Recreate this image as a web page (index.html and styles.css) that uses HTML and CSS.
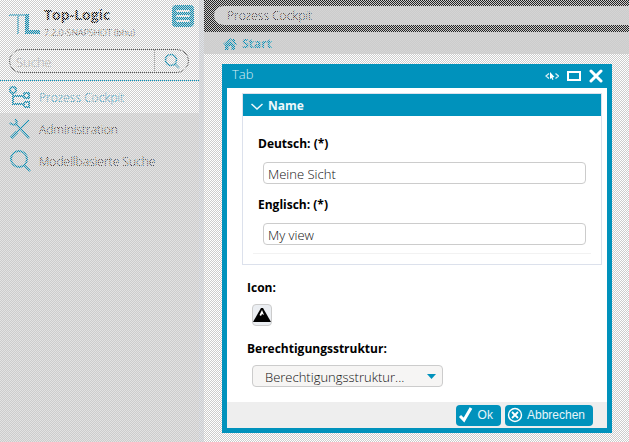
FILE: index.html
```
<!DOCTYPE html>
<html lang="de">
<head>
<meta charset="utf-8">
<title>Top-Logic</title>
<link rel="stylesheet" href="styles.css">
</head>
<body>
<div class="app">
  <aside class="sidebar">
    <header class="brand">
      <svg class="logo" width="32" height="22" viewBox="0 0 32 22" fill="none"><path d="M0 1H17" stroke="#4db4d3" stroke-width="2"/><path d="M9 1V20" stroke="#4db4d3" stroke-width="2"/><path d="M16 0h4v16h11v4H16z" fill="#0092bc"/></svg>
      <div class="brand-text"><strong>Top-Logic</strong><small>7.2.0-SNAPSHOT (bhu)</small></div>
      <button class="menu" aria-label="Menü"><svg width="22" height="22" viewBox="0 0 22 22" fill="none" stroke="#fff" stroke-width="2" stroke-linecap="round"><path d="M5 6h12M5 11h12M5 16h12"/></svg></button>
    </header>
    <form class="search">
      <input type="text" placeholder="Suche" aria-label="Suche">
      <button type="button" aria-label="Suchen"><svg width="16" height="16" viewBox="0 0 16 16" fill="none" stroke="#0092bc" stroke-width="1.500"><circle cx="7" cy="7" r="5.500"/><path d="M11 11l4 4"/></svg></button>
    </form>
    <nav class="nav">
      <a class="active" href="#"><svg width="22" height="22" viewBox="0 0 22 22" fill="none" stroke="#0092bc" stroke-width="2"><circle cx="4" cy="4" r="3"/><path d="M4 7v11h11M4 10h11"/><path d="M15 8l1-1h4v5h-4l-1-1zM15 17l1-1h4v5h-4l-1-1z"/></svg><span>Prozess Cockpit</span></a>
      <a href="#"><svg width="22" height="22" viewBox="0 0 22 22" fill="none" stroke="#0092bc"><path d="M20 2L2 20" stroke-width="2"/><path d="M8 14l-6 6" stroke-width="3"/><path d="M6 1c2 2 2 4 1 5S3 7 1 5M7 6l13 14" stroke-width="2"/></svg><span>Administration</span></a>
      <a href="#"><svg width="22" height="22" viewBox="0 0 22 22" fill="none" stroke="#0092bc" stroke-width="2"><circle cx="10" cy="9" r="8"/><path d="M15 15l6 6"/></svg><span>Modellbasierte Suche</span></a>
    </nav>
  </aside>
  <main class="main">
    <div class="topbar"><div class="pill">Prozess Cockpit</div></div>
    <div class="crumbs"><a href="#"><svg width="14" height="12" viewBox="0 0 14 12" fill="#0092bc"><path d="M7 0l3 2.500V1h2v3l2 2-1 1-6-5-6 5-1-1zM7 3l5 4v5H8.500V8h-3v4H2V7z"/></svg>Start</a></div>
  </main>
</div>
<div class="veil">
  <section class="dialog" role="dialog" aria-labelledby="dialog-title">
    <header class="titlebar">
      <h1 id="dialog-title">Tab</h1>
      <button aria-label="Inspizieren"><svg width="14" height="10" viewBox="0 0 14 10" fill="none" stroke="#d8edf4" stroke-width="1.300"><path d="M4 2.500L1 5l3 2.500M10.500 2.500l3 2.500-3 2.500"/><path d="M5 1v7l1.500-1 1 2 1-.5-1-2 2-.5z" fill="#fff" stroke="none"/></svg></button>
      <button aria-label="Maximieren"><svg width="14" height="10" viewBox="0 0 14 10" fill="none" stroke="#fff" stroke-width="2"><path d="M1 1h12v8H1z"/></svg></button>
      <button aria-label="Schließen"><svg width="14" height="14" viewBox="0 0 14 14" stroke="#fff" stroke-width="3" stroke-linecap="round"><path d="M2 2l10 10M12 2L2 12"/></svg></button>
    </header>
    <div class="content">
      <section class="group">
        <h2><svg width="12" height="7" viewBox="0 0 12 7" fill="none" stroke="#eef8fb" stroke-width="1.500"><path d="M.5 1L6 6l5.500-5"/></svg>Name</h2>
        <div class="group-body">
          <div class="field"><label for="de">Deutsch: (*)</label><input id="de" type="text" value="Meine Sicht"></div>
          <div class="field"><label for="en">Englisch: (*)</label><input id="en" type="text" value="My view"></div>
        </div>
      </section>
      <div class="field icon-field"><label for="icon">Icon:</label><button id="icon" class="icon-choice" aria-label="Icon wählen"><svg width="18" height="14" viewBox="0 0 18 14"><path d="M8 0h2l8 14H0z"/><path d="M9 2L6.500 7l1.500 1 1-2 2 1z" fill="#fff"/></svg></button></div>
      <div class="field"><label for="structure">Berechtigungsstruktur:</label>
        <div class="select"><select id="structure"><option>Berechtigungsstruktur...</option></select><svg width="9" height="5" viewBox="0 0 9 5"><path d="M0 0h9L4.500 5z" fill="#0092bc"/></svg></div></div>
    </div>
    <footer class="actions">
      <button><svg width="16" height="16" viewBox="0 0 16 16" fill="none" stroke="#fff" stroke-width="3"><path d="M2 9l4 4 7-12"/></svg>Ok</button>
      <button><svg width="16" height="16" viewBox="0 0 16 16" fill="none" stroke="#fff" stroke-width="1.400"><circle cx="8" cy="8" r="6.500"/><path d="M5 5l6 6M11 5l-6 6" stroke-width="1.800"/></svg>Abbrechen</button>
    </footer>
  </section>
</div>
</body>
</html>
```
FILE: styles.css
```
* { box-sizing: border-box; }
body { margin: 0; font: 300 13px/18px "Open Sans", sans-serif; color: #000; }
button, input, select { font: inherit; color: inherit; margin: 0; }
button { border: 0; padding: 0; background: none; display: flex; align-items: center; justify-content: center; }
a { color: inherit; text-decoration: none; }
svg { display: block; flex: none; }

.app { display: flex; min-height: 100vh; background: #fff; }
.sidebar { width: 204px; flex: none; display: flex; flex-direction: column; border-right: 5px solid #dfe3ea; }
.brand { display: flex; align-items: flex-start; padding: 5px 5px 0 9px; height: 49px; }
.logo { margin-top: 9px; }
.brand-text { flex: 1; padding-left: 3px; }
.brand-text strong { display: block; font-weight: 700; font-size: 14px; line-height: 20px; color: #000; }
.brand-text small { display: block; font-size: 9px; line-height: 16px; white-space: nowrap; }
.menu { width: 22px; height: 22px; border-radius: 4px; background: #0092bc; }
.search { display: flex; height: 24px; margin: 0 10px 7px 9px; border: 1px solid #555; border-radius: 12px; overflow: hidden; }
.search input { flex: 1; min-width: 0; border: 0; padding: 2px 6px 0; background: transparent; font-size: 13px; }
.search input::placeholder { color: #999; opacity: 1; }
.search button { width: 34px; border-left: 1px solid #aaa; }
.nav { flex: 1; border-top: 1px solid #0092bc; background: #e2e2e2; font-size: 12px; }
.nav a { display: flex; align-items: center; gap: 8px; height: 32px; padding-left: 9px; }
.nav span { padding-top: 2px; }
.nav .active { background: #fff; color: #0092bc; }

.main { flex: 1; min-width: 0; }
.topbar { background: #222; padding: 6px 0 7px 10px; }
.pill { height: 19px; padding-left: 13px; border-radius: 10px 0 0 10px; background: #d4d4d4; font-size: 12px; line-height: 20px; }
.crumbs { height: 22px; background: #d4d4d4; color: #0092bc; font-weight: 700; font-size: 12px; line-height: 24px; padding-left: 19px; }
.crumbs a { display: inline-flex; align-items: center; gap: 5px; }

.veil { position: absolute; inset: 0; padding: 64px 17px 9px 222px; background: repeating-conic-gradient(#ccc 0 25%, transparent 0 50%) 0 0 / 2px 2px; }
.dialog { border: 5px solid #0092bc; border-top: 0; background: #fff; }
.titlebar { height: 24px; display: flex; align-items: center; gap: 8px; padding: 0 4px 0 5px; background: #0092bc; color: #d8edf4; }
.titlebar h1 { flex: 1; margin: 0 0 4px; font-size: 13px; line-height: 20px; font-weight: 300; }
.content { padding: 5px 5px 15px 15px; }
.group { border: 1px solid #dce1ec; margin-bottom: 14px; }
.group h2 { display: flex; align-items: center; gap: 5px; height: 22px; margin: 0; padding: 2px 0 0 8px; background: #0092bc; color: #eef8fb; font-size: 12px; font-weight: 700; }
.group-body { margin: 0 10px 10px; padding: 19px 5px 8px 5px; border-bottom: 1px solid #f2f2f2; display: grid; gap: 12px; }
.field label { display: block; font-size: 12px; line-height: 18px; font-weight: 700; color: #000; }
.content > .field label { margin-left: 5px; }
.field input { display: block; width: calc(100% - 5px); height: 22px; margin: 9px 0 0 5px; padding: 2px 4px 0; border: 1px solid #ccc; border-radius: 4px; background: #fff; color: #111; }
.icon-field { margin-bottom: 14px; }
.icon-choice { width: 20px; height: 22px; margin: 7px 0 0 10px; border: 1px solid #ccc; border-radius: 4px; background: #ebeef2; }
.select { position: relative; width: 191px; margin: 7px 0 0 10px; }
.select select { appearance: none; display: block; width: 100%; height: 22px; padding: 2px 24px 0 12px; border: 1px solid #ccc; border-radius: 4px; background: #f6f5f4; color: #111; }
.select svg { position: absolute; right: 7px; top: 9px; pointer-events: none; }
.actions { display: flex; justify-content: flex-end; align-items: center; gap: 4px; height: 26px; padding-right: 14px; background: #eee; }
.actions button { height: 21px; padding: 0 8px 0 2px; gap: 4px; border-radius: 4px; background: #0092bc; color: #e6f5fa; font: 12px/16px "Liberation Sans", sans-serif; }
```
